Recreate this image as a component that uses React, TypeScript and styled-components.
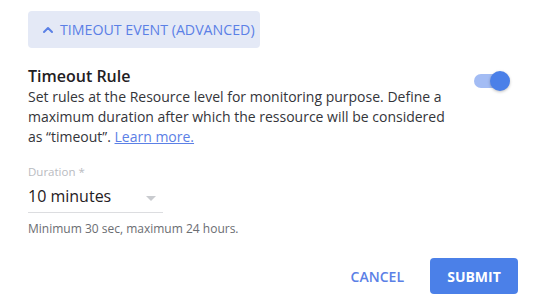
import styled, { createGlobalStyle } from "styled-components"

const GlobalStyle = createGlobalStyle`
    body {
        margin: 0;
        background: #ffffff;
        font-family: "Open Sans", "Noto Sans", sans-serif;
        color: #2f3033;
    }
`

const ChevronUp = () => <svg width="12" height="12" viewBox="0 0 12 12">
    <path d="M2 8 L6 4 L10 8" fill="none" stroke="currentColor" strokeWidth="2" strokeLinecap="round" strokeLinejoin="round"/>
</svg>

export default function App() {
    return <>
        <GlobalStyle/>
        <Root>
            <AccordionButton>
                <ChevronUp/>
                <span>Timeout Event (Advanced)</span>
            </AccordionButton>
            <RuleRow>
                <div>
                    <Title>Timeout Rule</Title>
                    <Description>
                        Set rules at the Resource level for monitoring purpose. Define a maximum duration after which the ressource will be considered as “timeout”. <a href="#">Learn more.</a>
                    </Description>
                </div>
                <Toggle $on><span className="track"/><span className="knob"/></Toggle>
            </RuleRow>
            <Field>
                <Label>Duration *</Label>
                <Select>
                    <span>10 minutes</span>
                    <span className="arrow"/>
                </Select>
                <Helper>Minimum 30 sec, maximum 24 hours.</Helper>
            </Field>
            <Actions>
                <TextButton>Cancel</TextButton>
                <PrimaryButton>Submit</PrimaryButton>
            </Actions>
        </Root>
    </>
}

const Root = styled.div`
    width: 533px;
    height: 304px;
    box-sizing: border-box;
    padding: 11px 15px 0 28px;
    display: flex;
    flex-direction: column;
`

const AccordionButton = styled.div`
    align-self: flex-start;
    display: flex;
    align-items: center;
    gap: 6px;
    height: 37px;
    box-sizing: border-box;
    padding: 0 0 0 14px;
    width: 232px;
    border-radius: 4px;
    background: #e4e9f6;
    color: #5b80e6;
    font-size: 14.2px;
    white-space: nowrap;
    text-transform: uppercase;
`

const RuleRow = styled.div`
    display: flex;
    align-items: flex-start;
    justify-content: space-between;
    margin-top: 17px;
    padding-right: 6px;
`

const Title = styled.div`
    font-size: 16px;
    font-weight: 600;
    line-height: 22px;
    color: #1f2023;
`

const Description = styled.p`
    margin: 0;
    width: 425px;
    font-size: 14px;
    line-height: 20px;
    color: #34353a;
    a {
        color: #5b80e6;
        text-decoration: underline;
    }
`

const Toggle = styled.div<{ $on: boolean }>`
    position: relative;
    width: 40px;
    height: 22px;
    margin-top: 5px;
    flex: 0 0 auto;
    > .track {
        position: absolute;
        left: 2px;
        top: 4px;
        width: 34px;
        height: 14px;
        border-radius: 7px;
        background: ${p => p.$on ? "#a3bcf4" : "#cfd2d8"};
    }
    > .knob {
        position: absolute;
        top: 1px;
        left: ${p => p.$on ? "18px" : "0"};
        width: 20px;
        height: 20px;
        border-radius: 50%;
        background: ${p => p.$on ? "#4b80e8" : "#f5f5f5"};
        box-shadow: 0 1px 3px rgba(0, 0, 0, 0.25);
    }
`

const Field = styled.div`
    margin-top: 17px;
    display: flex;
    flex-direction: column;
`

const Label = styled.div`
    font-size: 11.5px;
    line-height: 16px;
    color: #b9bbbf;
`

const Select = styled.div`
    width: 135px;
    height: 33px;
    box-sizing: border-box;
    display: flex;
    align-items: center;
    justify-content: space-between;
    padding-right: 7px;
    border-bottom: 1px solid #dcdde0;
    font-size: 16px;
    color: #1f2023;
    > .arrow {
        width: 0;
        height: 0;
        border-left: 5px solid transparent;
        border-right: 5px solid transparent;
        border-top: 5px solid #c9cbcf;
        margin-top: 4px;
    }
`

const Helper = styled.div`
    margin-top: 8px;
    font-size: 12px;
    line-height: 16px;
    color: #6b6d72;
`

const Actions = styled.div`
    display: flex;
    justify-content: flex-end;
    align-items: center;
    gap: 26px;
    margin-top: 21px;
`

const TextButton = styled.button`
    border: none;
    background: none;
    padding: 0;
    font-family: inherit;
    font-size: 14px;
    font-weight: 600;
    color: #5b80e6;
    text-transform: uppercase;
`

const PrimaryButton = styled.button`
    width: 88px;
    height: 36px;
    border: none;
    border-radius: 4px;
    background: #4b80e8;
    color: #ffffff;
    font-family: inherit;
    font-size: 14px;
    font-weight: 700;
    text-transform: uppercase;
`
